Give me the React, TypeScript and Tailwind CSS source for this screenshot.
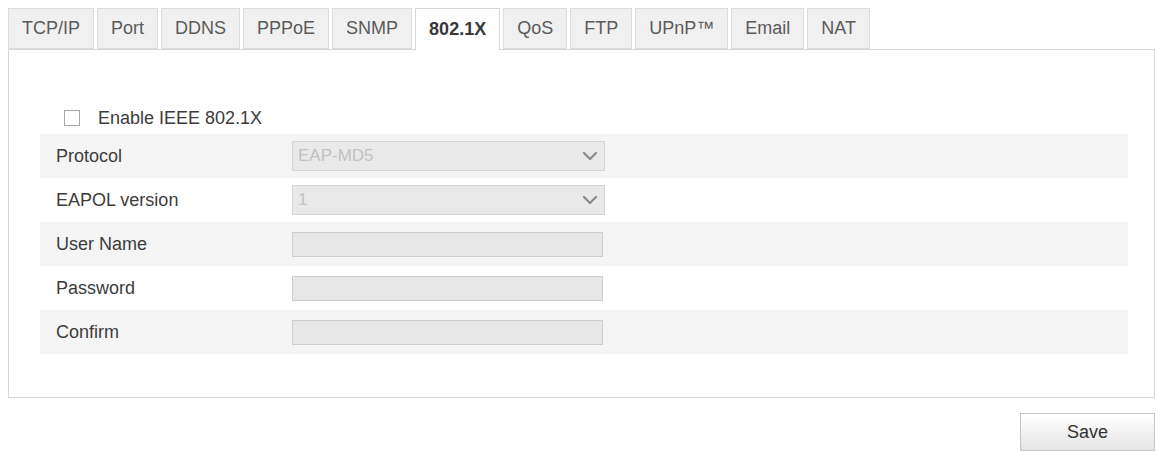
import { useState } from 'react'

const tabs = ['TCP/IP', 'Port', 'DDNS', 'PPPoE', 'SNMP', '802.1X', 'QoS', 'FTP', 'UPnP™', 'Email', 'NAT']

function Chevron() {
    return (
        <svg width="16" height="10" viewBox="0 0 16 10" className="shrink-0">
            <polyline points="2,2 8,8 14,2" fill="none" stroke="#8a8a8a" strokeWidth="2.2" strokeLinejoin="round" strokeLinecap="round" />
        </svg>
    )
}

function SelectBox({ value }: { value: string }) {
    return (
        <div className="w-[313px] h-[30px] bg-[#e9e9e9] border border-[#d4d4d4] flex items-center justify-between pl-[5px] pr-[6px]">
            <span className="text-[#c2c2c2] text-[17px]">{value}</span>
            <Chevron />
        </div>
    )
}

function TextBox() {
    return <div className="w-[311px] h-[25px] bg-[#e7e7e7] border border-[#cdcdcd]" />
}

export default function App() {
    const [active] = useState('802.1X')

    const rows = [
        { label: 'Protocol', control: <SelectBox value="EAP-MD5" /> },
        { label: 'EAPOL version', control: <SelectBox value="1" /> },
        { label: 'User Name', control: <TextBox /> },
        { label: 'Password', control: <TextBox /> },
        { label: 'Confirm', control: <TextBox /> },
    ]

    return (
        <div className="w-[1157px] h-[451px] bg-white pt-[8px] pl-[8px] pr-[2px] font-['Liberation_Sans',Arial,sans-serif] text-[18px] text-[#3c3c3c]">
            {/* tab strip */}
            <div className="flex gap-[3px] h-[41px] relative z-10">
                {tabs.map(t => (
                    <div
                        key={t}
                        className={
                            t === active
                                ? 'h-[42px] px-[13px] flex items-center border border-b-0 border-[#d6d6d6] bg-white font-bold text-[#383838]'
                                : 'h-[41px] px-[13px] flex items-center border border-[#dcdcdc] bg-[#f0f0f0] text-[#5a5a5a]'
                        }
                    >
                        {t}
                    </div>
                ))}
            </div>

            {/* panel */}
            <div className="border border-[#d6d6d6] h-[349px] pl-[31px] pr-[26px] pt-[58px]">
                <div className="flex items-center h-[20px] pl-[24px]">
                    <div className="w-[16px] h-[16px] border border-[#a8a8a8] bg-white" />
                    <span className="ml-[18px]">Enable IEEE 802.1X</span>
                </div>

                <div className="mt-[6px]">
                    {rows.map((r, i) => (
                        <div key={r.label} className={`flex items-center h-[44px] ${i % 2 === 0 ? 'bg-[#f5f5f5]' : 'bg-white'}`}>
                            <div className="w-[252px] pl-[16px] shrink-0">{r.label}</div>
                            {r.control}
                        </div>
                    ))}
                </div>
            </div>

            <div className="flex justify-end mt-[15px]">
                <button className="w-[135px] h-[38px] border border-[#c6c6c6] bg-gradient-to-b from-white to-[#e4e4e4] text-[#333] text-[18px]">
                    Save
                </button>
            </div>
        </div>
    )
}
